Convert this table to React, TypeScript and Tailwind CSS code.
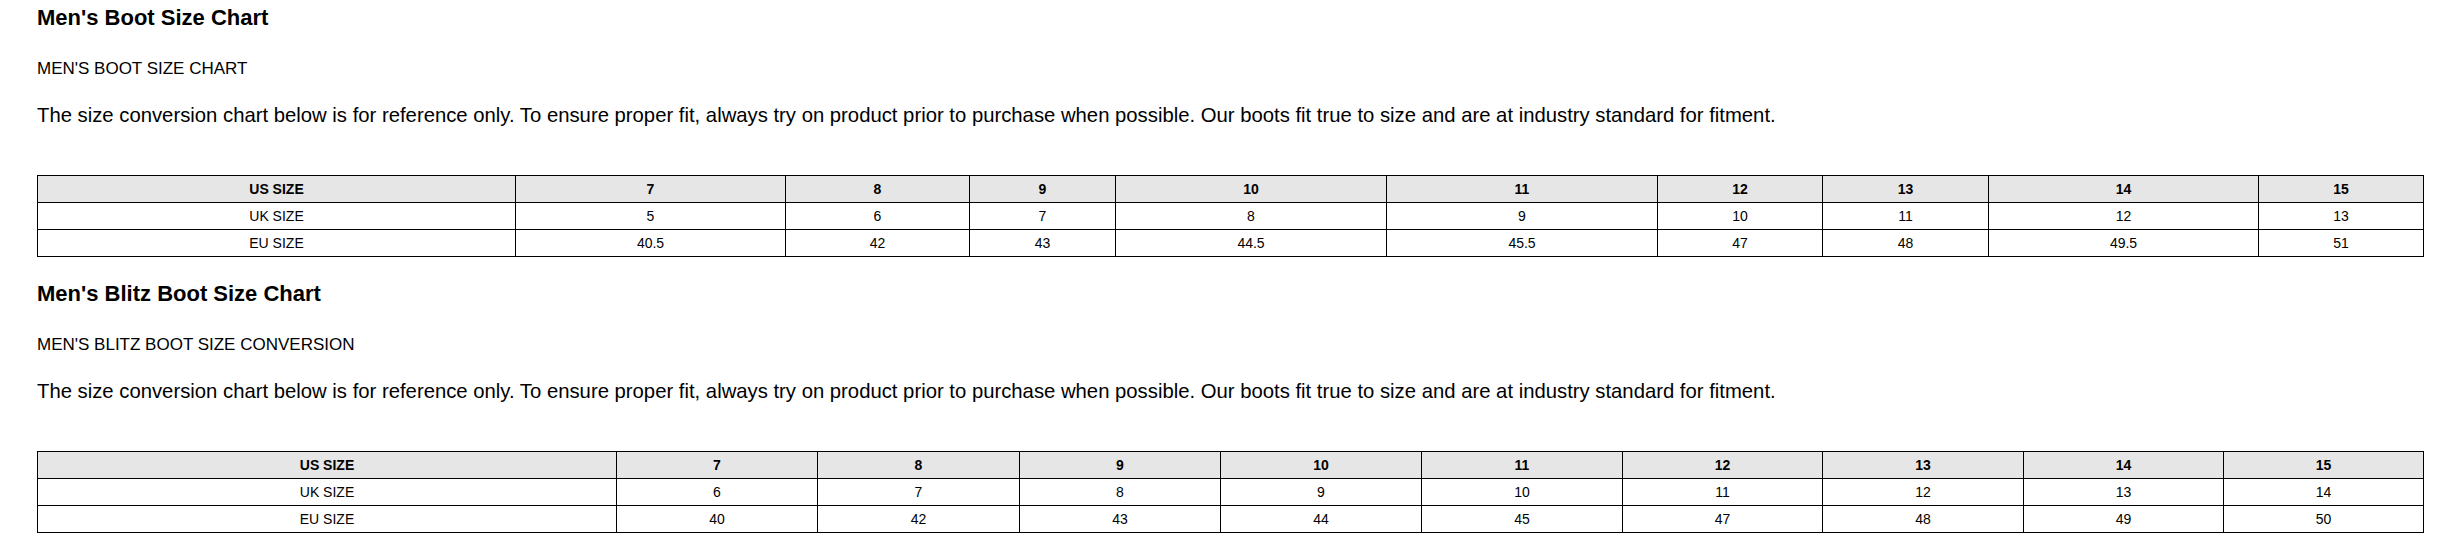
const bootChart = {
  us: ["7", "8", "9", "10", "11", "12", "13", "14", "15"],
  uk: ["5", "6", "7", "8", "9", "10", "11", "12", "13"],
  eu: ["40.5", "42", "43", "44.5", "45.5", "47", "48", "49.5", "51"],
};

const blitzChart = {
  us: ["7", "8", "9", "10", "11", "12", "13", "14", "15"],
  uk: ["6", "7", "8", "9", "10", "11", "12", "13", "14"],
  eu: ["40", "42", "43", "44", "45", "47", "48", "49", "50"],
};

// column widths measured off the page (first is the label column)
const bootCols = ["w-[478px]", "w-[270px]", "w-[184px]", "w-[146px]", "w-[271px]", "w-[271px]", "w-[165px]", "w-[166px]", "w-[270px]", "w-[165px]"];
const blitzCols = ["w-[579px]", "w-[201px]", "w-[202px]", "w-[201px]", "w-[201px]", "w-[201px]", "w-[200px]", "w-[201px]", "w-[200px]", "w-[200px]"];

const disclaimer =
  "The size conversion chart below is for reference only. To ensure proper fit, always try on product prior to purchase when possible. Our boots fit true to size and are at industry standard for fitment.";

type Chart = { us: string[]; uk: string[]; eu: string[] };

function SizeTable({ chart, cols }: { chart: Chart; cols: string[] }) {
  const cell = "border border-black h-[27px] p-0 text-center align-middle text-[14px] leading-none";
  return (
    <table className="w-[2386px] table-fixed border-collapse border border-black">
      <colgroup>
        {cols.map((c, i) => (
          <col key={i} className={c} />
        ))}
      </colgroup>
      <tbody>
        <tr className="bg-[#e6e6e6]">
          <td className={`${cell} font-bold`}>US SIZE</td>
          {chart.us.map((v, i) => (
            <td key={i} className={`${cell} font-bold`}>
              {v}
            </td>
          ))}
        </tr>
        <tr>
          <td className={cell}>UK SIZE</td>
          {chart.uk.map((v, i) => (
            <td key={i} className={cell}>
              {v}
            </td>
          ))}
        </tr>
        <tr>
          <td className={cell}>EU SIZE</td>
          {chart.eu.map((v, i) => (
            <td key={i} className={cell}>
              {v}
            </td>
          ))}
        </tr>
      </tbody>
    </table>
  );
}

function ChartSection({ title, subtitle, chart, cols, first }: { title: string; subtitle: string; chart: Chart; cols: string[]; first?: boolean }) {
  return (
    <section className={first ? "pt-[3px]" : "pt-[22px]"}>
      <h2 className="text-[22px] font-bold leading-[30px]">{title}</h2>
      <p className="mt-[24px] text-[17px] leading-[24px] uppercase">{subtitle}</p>
      <p className="mt-[21px] text-[20.3px] leading-[26px]">{disclaimer}</p>
      <div className="mt-[47px]">
        <SizeTable chart={chart} cols={cols} />
      </div>
    </section>
  );
}

export default function App() {
  return (
    <div className="min-h-[545px] bg-white pl-[37px] text-black font-['Liberation_Sans',Arial,sans-serif]">
      <ChartSection first title="Men's Boot Size Chart" subtitle="Men's Boot Size Chart" chart={bootChart} cols={bootCols} />
      <ChartSection title="Men's Blitz Boot Size Chart" subtitle="Men's Blitz Boot Size Conversion" chart={blitzChart} cols={blitzCols} />
    </div>
  );
}
